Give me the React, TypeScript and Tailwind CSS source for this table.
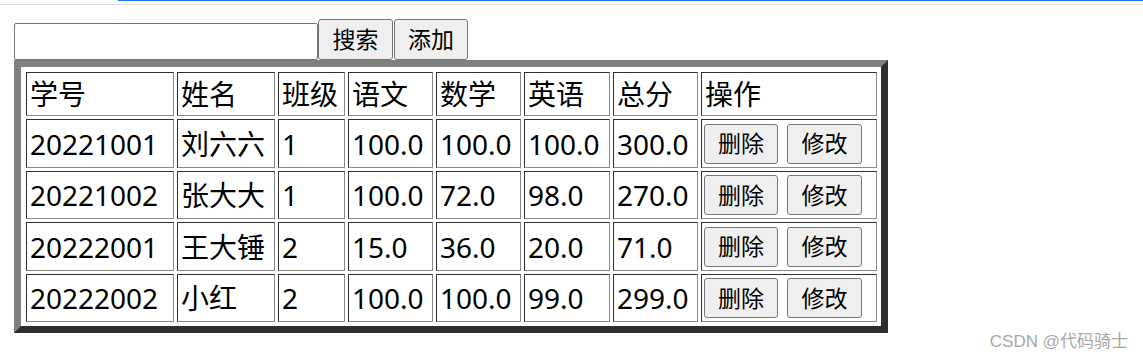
import React from "react"

const font = { fontFamily: '"Noto Sans", "Noto Sans CJK SC", sans-serif' }

const columns = [
  { title: "学号", w: "w-[148px]" },
  { title: "姓名", w: "w-[98px]" },
  { title: "班级", w: "w-[67px]" },
  { title: "语文", w: "w-[85px]" },
  { title: "数学", w: "w-[85px]" },
  { title: "英语", w: "w-[86px]" },
  { title: "总分", w: "w-[85px]" },
  { title: "操作", w: "w-[176px]" },
]

const students = [
  { id: "20221001", name: "刘六六", cls: "1", chinese: "100.0", math: "100.0", english: "100.0", total: "300.0", h: "h-[49px]" },
  { id: "20221002", name: "张大大", cls: "1", chinese: "100.0", math: "72.0", english: "98.0", total: "270.0", h: "h-[48px]" },
  { id: "20222001", name: "王大锤", cls: "2", chinese: "15.0", math: "36.0", english: "20.0", total: "71.0", h: "h-[49px]" },
  { id: "20222002", name: "小红", cls: "2", chinese: "100.0", math: "100.0", english: "99.0", total: "299.0", h: "h-[48px]" },
]

// inset cell border, like <table border>
const cell =
  "border border-t-[#2f2f2f] border-l-[#2f2f2f] border-r-[#8a8a8a] border-b-[#8a8a8a] px-[3px] py-0 text-left align-middle font-normal whitespace-nowrap"

const btn =
  "bg-[#efefef] border border-[#767676] rounded-[3px] text-[23px] leading-none text-black"

export default function App() {
  return (
    <div className="relative h-[358px] w-full bg-white text-black" style={font}>
      {/* top bars */}
      <div className="h-px ml-[118px] bg-[#1a73e8]" />
      <div className="h-px mt-[3px] bg-[#dadce0]" />

      {/* search row */}
      <div className="flex items-end mt-[14px] ml-[14px]">
        <input
          type="text"
          className="w-[304px] h-[37px] border border-[#767676] rounded-[2px] bg-white outline-none"
        />
        <button className={`${btn} w-[75px] h-[41px]`}>搜索</button>
        <button className={`${btn} w-[74px] h-[41px] ml-px`}>添加</button>
      </div>

      {/* table */}
      <div className="ml-[14px] w-[874px] border-[7px] border-t-[#808080] border-l-[#808080] border-r-[#2f2f2f] border-b-[#2f2f2f] pt-[2px] pl-[2px] pr-px pb-px">
        <table className="table-fixed border-separate border-spacing-[3px] text-[28px] leading-none">
          <thead>
            <tr className="h-[44px]">
              {columns.map((c) => (
                <th key={c.title} className={`${cell} ${c.w}`}>
                  {c.title}
                </th>
              ))}
            </tr>
          </thead>
          <tbody>
            {students.map((s) => (
              <tr key={s.id} className={s.h}>
                <td className={cell}>{s.id}</td>
                <td className={cell}>{s.name}</td>
                <td className={cell}>{s.cls}</td>
                <td className={cell}>{s.chinese}</td>
                <td className={cell}>{s.math}</td>
                <td className={cell}>{s.english}</td>
                <td className={cell}>{s.total}</td>
                <td className={`${cell} pl-[2px]`}>
                  <div className="flex gap-[9px]">
                    <button className={`${btn} w-[74px] h-[40px]`}>删除</button>
                    <button className={`${btn} w-[75px] h-[40px]`}>修改</button>
                  </div>
                </td>
              </tr>
            ))}
          </tbody>
        </table>
      </div>

      {/* watermark */}
      <div
        className="absolute right-[15px] bottom-[8px] text-[17px] leading-none text-[#a8a8a8]"
        style={{ fontFamily: '"Liberation Sans", "Noto Sans CJK SC", sans-serif' }}
      >
        CSDN @代码骑士
      </div>
    </div>
  )
}
